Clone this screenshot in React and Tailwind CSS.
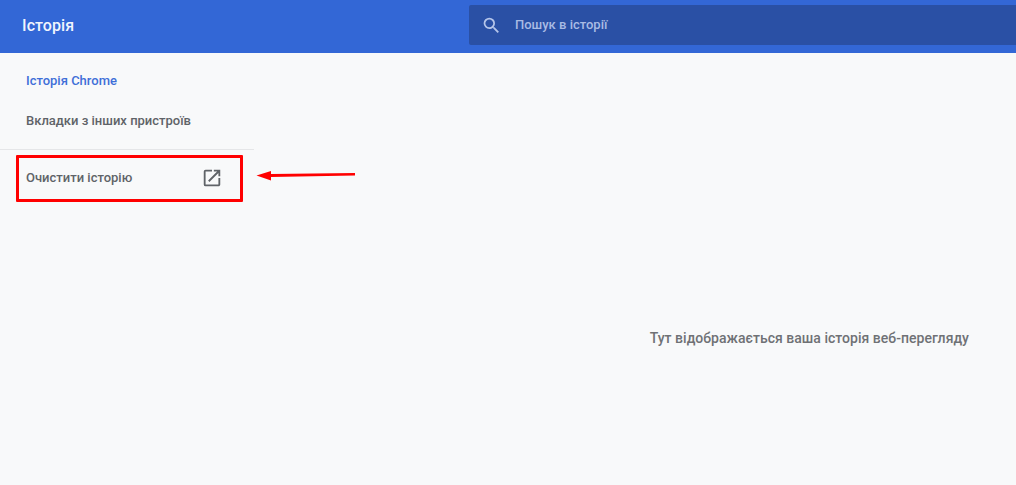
function SearchIcon(){
  return (
    <svg width="21" height="21" viewBox="0 0 24 24" fill="#b5c5ea">
      <path d="M15.5 14h-.79l-.28-.27A6.47 6.47 0 0 0 16 9.5 6.5 6.5 0 1 0 9.5 16c1.61 0 3.09-.59 4.23-1.57l.27.28v.79l5 4.99L20.49 19l-4.99-5zm-6 0C7.01 14 5 11.99 5 9.5S7.01 5 9.5 5 14 7.01 14 9.5 11.99 14 9.5 14z"/>
    </svg>
  )
}

function OpenInNew(){
  return (
    <svg width="22" height="22" viewBox="0 0 24 24" fill="#5f6368">
      <path d="M19 19H5V5h7V3H5a2 2 0 0 0-2 2v14a2 2 0 0 0 2 2h14c1.1 0 2-.9 2-2v-7h-2v7zM14 3v2h3.59l-9.83 9.83 1.41 1.41L19 6.41V10h2V3h-7z"/>
    </svg>
  )
}

export default function App(){
  return (
    <div className="relative h-[485px] w-[1016px] overflow-hidden bg-[#f8f9fa] font-['Roboto',sans-serif]">
      <header className="flex h-[53px] bg-[#3367d6]">
        <div className="w-[469px] pl-[22px] pt-[15px] text-[16px] leading-[22px] font-medium tracking-[0.1px] text-[#f1f5fd]">Історія</div>
        <div className="mt-[5px] flex h-[40px] flex-1 items-center rounded-l-[2px] bg-[#2a50a5] pl-[12px]">
          <SearchIcon />
          <span className="ml-[13px] text-[13px] font-medium text-[#a9bbe4]">Пошук в історії</span>
        </div>
      </header>
      <div className="flex h-[432px]">
        <aside className="w-[254px]">
          <div className="flex h-[56px] items-center pl-[26px] text-[13px] font-medium text-[#3f6fd8]">Історія Chrome</div>
          <div className="flex h-[24px] items-center pl-[26px] text-[13px] font-medium text-[#5f6368]">Вкладки з інших пристроїв</div>
          <div className="mt-[16px] border-t border-[#e5e6e8]" />
          <div className="flex h-[54px] items-center justify-between pl-[26px] pr-[31px] pt-[2px] text-[13px] font-medium text-[#5f6368]">
            <span>Очистити історію</span>
            <OpenInNew />
          </div>
        </aside>
        <main className="flex flex-1 justify-end pr-[47px] pt-[275px]">
          <span className="text-[14px] leading-[20px] font-medium tracking-[0.025px] text-[#6f7175]">Тут відображається ваша історія веб-перегляду</span>
        </main>
      </div>
      {/* annotation over the screenshot */}
      <div className="absolute left-[16px] top-[155px] h-[47px] w-[227px] rounded-[1px] border-[3px] border-[#ff0000]" />
      <svg className="absolute left-[255px] top-[169px]" width="102" height="14" viewBox="0 0 102 14">
        <path d="M1.5 6.5 L16 2 L16 5 L100 4 L100 6.5 L16 8 L16 11.5 Z" fill="#ff0000" />
      </svg>
    </div>
  )
}
